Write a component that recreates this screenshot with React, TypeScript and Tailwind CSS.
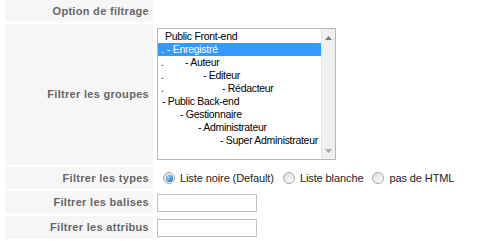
import React from "react";

// x = text start (px from list's left edge), dot = leading "." column
const groups = [
  { text: "Public Front-end", x: 7 },
  { text: "- Enregistré", x: 9, dot: true, selected: true },
  { text: "- Auteur", x: 27, dot: true },
  { text: "- Editeur", x: 45, dot: true },
  { text: "- Rédacteur", x: 64, dot: true },
  { text: "- Public Back-end", x: 4 },
  { text: "- Gestionnaire", x: 22 },
  { text: "- Administrateur", x: 40 },
  { text: "- Super Administrateur", x: 62 },
];

const Label = ({ children, h }: { children: React.ReactNode; h: string }) => (
  <div
    className={`w-[148px] shrink-0 bg-[#f6f6f6] flex items-center justify-end pr-[4px] text-[11px] tracking-[0.3px] font-bold text-[#666666] ${h}`}
  >
    {children}
  </div>
);

const Radio = ({ checked, label }: { checked?: boolean; label: string }) => (
  <label className="flex items-center gap-[5px]">
    <span className="w-[12px] h-[12px] rounded-full border border-[#a8a8a8] bg-gradient-to-br from-[#dcdcdc] to-[#ffffff] flex items-center justify-center">
      {checked && (
        <span className="w-[7px] h-[7px] rounded-full bg-[radial-gradient(circle_at_35%_35%,#8fd8ff,#0a5ea8)]" />
      )}
    </span>
    <span>{label}</span>
  </label>
);

export default function App() {
  return (
    <div
      className="w-[482px] h-[241px] bg-white pl-[5px] flex flex-col gap-[2px]"
      style={{ fontFamily: '"Liberation Sans", Arial, sans-serif' }}
    >
      <div className="flex">
        <Label h="h-[22px]">Option de filtrage</Label>
      </div>

      <div className="flex">
        <Label h="h-[141px]">Filtrer les groupes</Label>
        <div className="pl-[4px] pt-[4px]">
          <div className="w-[179px] h-[132px] border border-[#b8b8b8] flex bg-white">
            <div className="flex-1 pt-[1px] text-[10.5px] tracking-[-0.3px] leading-[13px] text-black">
              {groups.map((g, i) => (
                <div
                  key={i}
                  className={`h-[13px] whitespace-nowrap flex ${g.selected ? "bg-[#3399ff] text-white" : ""}`}
                  style={{ paddingLeft: g.dot ? 3 : g.x }}
                >
                  {g.dot && (
                    <span className="inline-block" style={{ width: g.x - 3 }}>
                      .
                    </span>
                  )}
                  <span>{g.text}</span>
                </div>
              ))}
            </div>
            <div className="w-[14px] bg-[#f0f0f0] border-l border-[#e6e6e6] flex flex-col justify-between items-center pt-[7px] pb-[6px]">
              <svg width="7" height="4" viewBox="0 0 7 4">
                <path d="M3.5 0 L7 4 L0 4 Z" fill="#7a7a7a" />
              </svg>
              <svg width="7" height="4" viewBox="0 0 7 4">
                <path d="M0 0 L7 0 L3.5 4 Z" fill="#a8a8a8" />
              </svg>
            </div>
          </div>
        </div>
      </div>

      <div className="flex">
        <Label h="h-[22px]">Filtrer les types</Label>
        <div className="pl-[10px] flex items-center gap-[9px] text-[11px] tracking-[-0.1px] text-[#222]">
          <Radio checked label="Liste noire (Default)" />
          <Radio label="Liste blanche" />
          <Radio label="pas de HTML" />
        </div>
      </div>

      <div className="flex">
        <Label h="h-[23px]">Filtrer les balises</Label>
        <div className="pl-[4px] flex items-center">
          <input className="w-[100px] h-[18px] border border-[#c0c0c0] outline-none" />
        </div>
      </div>

      <div className="flex">
        <Label h="h-[23px]">Filtrer les attribus</Label>
        <div className="pl-[4px] flex items-center">
          <input className="w-[100px] h-[18px] border border-[#c0c0c0] outline-none" />
        </div>
      </div>
    </div>
  );
}
